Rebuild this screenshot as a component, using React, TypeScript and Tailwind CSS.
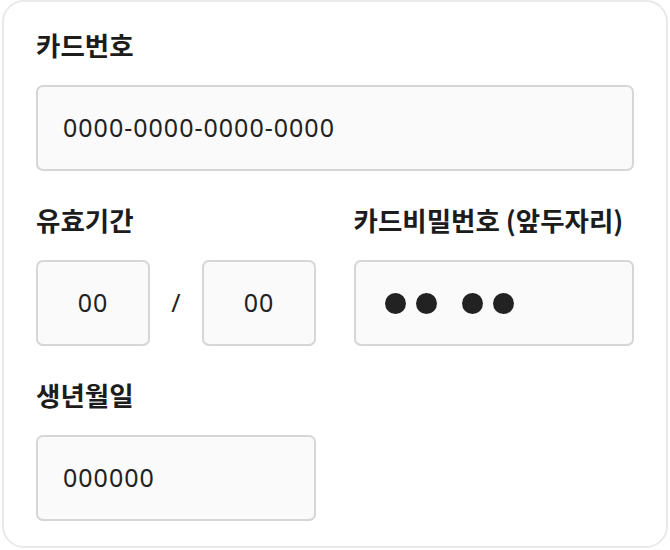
import React from "react";

const font = { fontFamily: '"Noto Sans", "Noto Sans CJK KR", sans-serif' };

function Label({ children }: { children: React.ReactNode }) {
  return (
    <div
      className="h-[30px] leading-[30px] text-[26.5px] font-semibold text-[#1c1c1c] whitespace-nowrap"
      style={{ fontFamily: '"Noto Sans CJK KR", "Noto Sans", sans-serif' }}
    >
      {children}
    </div>
  );
}

const boxCls =
  "h-[86px] border-2 border-[#d6d6d6] bg-[#fafafa] rounded-[7px] flex items-center text-[25px] tracking-[1px] text-[#222]";

export default function App() {
  return (
    <div className="w-[670px] h-[550px] bg-white pl-[2px]" style={font}>
      <div className="w-[666px] h-[548px] border-2 border-[#e9e9e9] rounded-[22px] px-[32px] pt-[28px] flex flex-col">
        <Label>카드번호</Label>
        <div className={`${boxCls} mt-[25px] pl-[25px]`}>0000-0000-0000-0000</div>

        <div className="grid grid-cols-2 gap-x-[37px] mt-[34px]">
          <div className="flex flex-col">
            <Label>유효기간</Label>
            <div className="mt-[25px] flex items-center">
              <div className={`${boxCls} w-[114px] justify-center`}>00</div>
              <div className="w-[52px] text-center text-[25px] text-[#222]">/</div>
              <div className={`${boxCls} w-[114px] justify-center`}>00</div>
            </div>
          </div>
          <div className="flex flex-col">
            <Label>카드비밀번호 (앞두자리)</Label>
            <div className={`${boxCls} mt-[25px] pl-[29px]`}>
              <span className="w-[21px] h-[21px] rounded-full bg-[#222]" />
              <span className="w-[21px] h-[21px] rounded-full bg-[#222] ml-[10px]" />
              <span className="w-[21px] h-[21px] rounded-full bg-[#222] ml-[25px]" />
              <span className="w-[21px] h-[21px] rounded-full bg-[#222] ml-[10px]" />
            </div>
          </div>
        </div>

        <div className="mt-[34px] w-[280px] flex flex-col">
          <Label>생년월일</Label>
          <div className={`${boxCls} mt-[25px] pl-[25px]`}>000000</div>
        </div>
      </div>
    </div>
  );
}
